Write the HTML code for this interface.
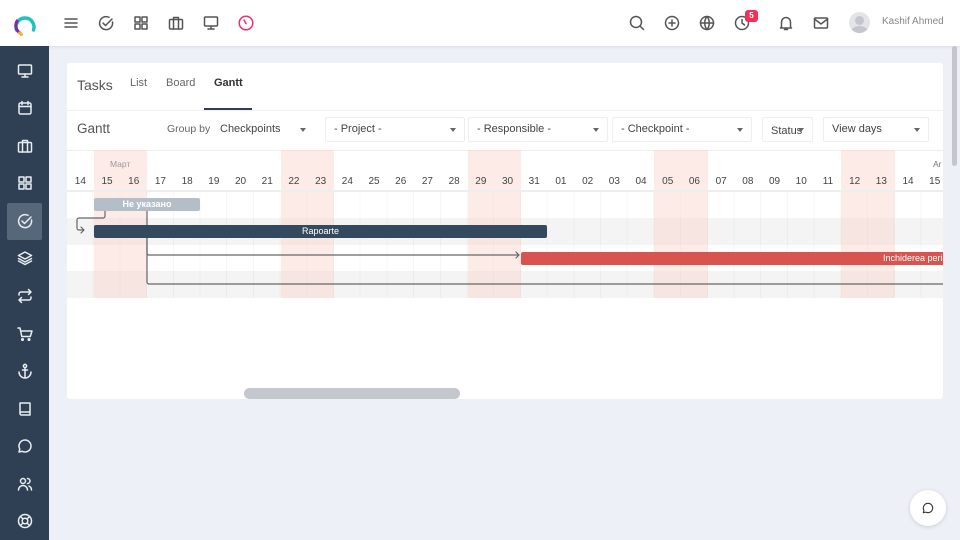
<!DOCTYPE html>
<html><head><meta charset="utf-8"><style>
*{box-sizing:border-box;margin:0;padding:0}
body{width:960px;height:540px;overflow:hidden;background:#eef0f8;font-family:"Liberation Sans","Noto Sans CJK JP",sans-serif;position:relative;color:#555}
.abs{position:absolute}
#top{left:0;top:0;width:960px;height:46px;background:#fff;box-shadow:0 1px 3px rgba(0,0,0,.08)}
#side{left:0;top:46px;width:49px;height:494px;background:#2f4054}
svg{fill:none;stroke-linecap:round;stroke-linejoin:round}
.ti{position:absolute;top:14px;width:18px;height:18px;stroke:#555;stroke-width:1.5}
.si{position:absolute;left:16px;width:18px;height:18px;stroke:#e8edf2;stroke-width:1.5}
#card{left:67px;top:63px;width:876px;height:336px;background:#fff;border-radius:3px}
.sel{position:absolute;top:117px;height:25px;border:1px solid #eee;border-radius:2px;font-size:11px;color:#444;padding:5px 8px;background:#fff}
.sel:after{content:"";position:absolute;right:8px;top:10px;border:3px solid transparent;border-top:4px solid #666}
.day{position:absolute;top:176px;width:26.7px;text-align:center;font-size:10px;color:#444}
.pink{position:absolute;top:150px;height:148px;width:53.4px;background:rgba(250,210,205,.45)}
.bar{position:absolute;height:13px;border-radius:2px;font-size:9px;color:#fff;text-align:center;line-height:13px}
</style></head><body>
<div id="top" class="abs"></div>
<svg class="abs" style="left:13px;top:13px" width="24" height="24" viewBox="0 0 24 24"><path d="M3.5 17 A9 9 0 1 1 20.5 17" stroke="#1ec2c0" stroke-width="3.5"/><path d="M4 8 A9 9 0 0 0 7 20" stroke="#7b2aa8" stroke-width="3"/><path d="M6.5 20 l2 1.5" stroke="#f5b52a" stroke-width="3"/></svg>
<svg class="ti" style="left:62px" viewBox="0 0 18 18"><path d="M3 5h12M3 9h12M3 13h12"/></svg>
<svg class="ti" style="left:97px" viewBox="0 0 18 18"><path d="M15.5 8A6.5 6.5 0 1 1 12 3.3"/><path d="M6 9l2.5 2.5L15 5"/></svg>
<svg class="ti" style="left:132px" viewBox="0 0 18 18"><rect x="3" y="3" width="5" height="5"/><rect x="10" y="3" width="5" height="5"/><rect x="3" y="10" width="5" height="5"/><rect x="10" y="10" width="5" height="5"/></svg>
<svg class="ti" style="left:167px" viewBox="0 0 18 18"><rect x="2.5" y="5.5" width="13" height="9.5" rx="1"/><path d="M6.5 5.5V3.5h5v2M6.5 5.5v9.5M11.5 5.5v9.5"/></svg>
<svg class="ti" style="left:202px" viewBox="0 0 18 18"><rect x="2.5" y="3" width="13" height="9" rx="1"/><path d="M9 12v3M6 15h6"/></svg>
<svg class="ti" style="left:237px;stroke:#f0306a" viewBox="0 0 18 18"><circle cx="9" cy="9" r="6.8"/><path d="M7 6l2 3.5"/></svg>
<svg class="ti" style="left:628px" viewBox="0 0 18 18"><circle cx="8" cy="8" r="5.5"/><path d="M12 12l3.5 3.5"/></svg>
<svg class="ti" style="left:663px" viewBox="0 0 18 18"><circle cx="9" cy="9" r="6.5"/><path d="M9 6v6M6 9h6"/></svg>
<svg class="ti" style="left:698px" viewBox="0 0 18 18"><circle cx="9" cy="9" r="6.5"/><path d="M2.5 9h13M9 2.5c-3 3.5-3 9.5 0 13M9 2.5c3 3.5 3 9.5 0 13"/></svg>
<svg class="ti" style="left:733px" viewBox="0 0 18 18"><circle cx="9" cy="9" r="6.5"/><path d="M9 5.5V9l2.5 2"/></svg>
<div class="abs" style="left:745px;top:10px;width:13px;height:12px;background:#f0305a;border-radius:3px;color:#fff;font-size:8px;text-align:center;line-height:12px;font-weight:bold">5</div>
<svg class="ti" style="left:777px" viewBox="0 0 18 18"><path d="M4.5 13V8a4.5 4.5 0 0 1 9 0v5l1 1h-11zM7.5 15.5h3"/></svg>
<svg class="ti" style="left:812px" viewBox="0 0 18 18"><rect x="2.5" y="4" width="13" height="10" rx="1"/><path d="M2.5 5l6.5 5 6.5-5"/></svg>
<div class="abs" style="left:849px;top:12px;width:21px;height:21px;border-radius:50%;background:#e2e4e8;overflow:hidden"><div class="abs" style="left:6px;top:4px;width:9px;height:9px;border-radius:50%;background:#c3c6cc"></div><div class="abs" style="left:2px;top:14px;width:17px;height:12px;border-radius:50%;background:#c3c6cc"></div></div>
<div class="abs" style="left:882px;top:16px;font-size:10px;color:#888">Kashif Ahmed</div>

<div id="side" class="abs"></div>
<div class="abs" style="left:7px;top:203px;width:35px;height:37px;background:#56677a;border-radius:2px"></div>
<svg class="si" style="top:62px" viewBox="0 0 18 18"><rect x="2.5" y="3" width="13" height="9" rx="1"/><path d="M9 12v3M6 15h6"/></svg>
<svg class="si" style="top:99px" viewBox="0 0 18 18"><rect x="3" y="4" width="12" height="11" rx="1.5"/><path d="M3 7.5h12M6 2.5v3M12 2.5v3"/></svg>
<svg class="si" style="top:137px" viewBox="0 0 18 18"><rect x="2.5" y="5.5" width="13" height="9.5" rx="1"/><path d="M6.5 5.5V3.5h5v2M6.5 5.5v9.5M11.5 5.5v9.5"/></svg>
<svg class="si" style="top:174px" viewBox="0 0 18 18"><rect x="3" y="3" width="5" height="5"/><rect x="10" y="3" width="5" height="5"/><rect x="3" y="10" width="5" height="5"/><rect x="10" y="10" width="5" height="5"/></svg>
<svg class="si" style="top:212px" viewBox="0 0 18 18"><path d="M15.5 8A6.5 6.5 0 1 1 12 3.3"/><path d="M6 9l2.5 2.5L15 5"/></svg>
<svg class="si" style="top:249px" viewBox="0 0 18 18"><path d="M9 3l6.5 3.5L9 10 2.5 6.5z"/><path d="M2.5 9.5L9 13l6.5-3.5M2.5 12L9 15.5l6.5-3.5"/></svg>
<svg class="si" style="top:287px" viewBox="0 0 18 18"><path d="M3 8V7a2 2 0 0 1 2-2h10M12.5 2.5L15 5l-2.5 2.5M15 10v1a2 2 0 0 1-2 2H3M5.5 15.5L3 13l2.5-2.5"/></svg>
<svg class="si" style="top:325px" viewBox="0 0 18 18"><path d="M2 3h2l1.8 8.5h8.5L16 6H5"/><circle cx="6.5" cy="14.5" r=".8"/><circle cx="13" cy="14.5" r=".8"/></svg>
<svg class="si" style="top:362px" viewBox="0 0 18 18"><circle cx="9" cy="4" r="1.6"/><path d="M9 5.6V16M3 10a6 6 0 0 0 12 0M6.5 8h5"/></svg>
<svg class="si" style="top:400px" viewBox="0 0 18 18"><path d="M4 3h10v12H5.5A1.5 1.5 0 0 1 4 13.5zM4 13.5A1.5 1.5 0 0 1 5.5 12H14"/></svg>
<svg class="si" style="top:437px" viewBox="0 0 18 18"><path d="M9 3a6 6 0 1 1-2.8 11.3L3 15l.8-3A6 6 0 0 1 9 3z"/></svg>
<svg class="si" style="top:475px" viewBox="0 0 18 18"><circle cx="7" cy="6" r="2.5"/><path d="M2.5 15a4.5 4.5 0 0 1 9 0M11.5 3.5a2.5 2.5 0 0 1 0 5M13 11a4.5 4.5 0 0 1 2.5 4"/></svg>
<svg class="si" style="top:512px" viewBox="0 0 18 18"><circle cx="9" cy="9" r="6.5"/><circle cx="9" cy="9" r="2.8"/><path d="M4.5 4.5l2.5 2.5M13.5 4.5L11 7M4.5 13.5L7 11M13.5 13.5L11 11"/></svg>

<div id="card" class="abs"></div>
<div class="abs" style="left:77px;top:77px;font-size:14px;color:#555">Tasks</div>
<div class="abs" style="left:130px;top:77px;font-size:11px;color:#666">List</div>
<div class="abs" style="left:166px;top:77px;font-size:11px;color:#666">Board</div>
<div class="abs" style="left:214px;top:77px;font-size:11px;color:#333;font-weight:bold">Gantt</div>
<div class="abs" style="left:204px;top:108px;width:48px;height:2px;background:#2f4054"></div>
<div class="abs" style="left:67px;top:110px;width:876px;height:1px;background:#f0f0f2"></div>
<div class="abs" style="left:77px;top:121px;font-size:13.5px;color:#555">Gantt</div>
<div class="abs" style="left:167px;top:123px;font-size:10.5px;color:#666">Group by:</div>
<div class="sel" style="left:211px;width:104px;border-color:#fff">Checkpoints</div>
<div class="sel" style="left:325px;width:140px">- Project -</div>
<div class="sel" style="left:468px;width:140px">- Responsible -</div>
<div class="sel" style="left:612px;width:140px">- Checkpoint -</div>
<div class="sel" style="left:762px;width:51px;padding-top:7px">Status</div>
<div class="sel" style="left:823px;width:106px">View days</div>

<div class="abs" style="left:67px;top:150px;width:876px;height:1px;background:#eee"></div>
<div class="abs" style="left:67px;top:218px;width:876px;height:27px;background:#f4f4f4"></div>
<div class="abs" style="left:67px;top:271px;width:876px;height:27px;background:#f4f4f4"></div>
<div class="abs" style="left:67px;top:192px;width:876px;height:106px;background:repeating-linear-gradient(90deg,transparent 0,transparent 25.7px,rgba(0,0,0,.03) 25.7px,rgba(0,0,0,.03) 26.7px)"></div>
<div class="pink" style="left:93.7px"></div>
<div class="pink" style="left:280.6px"></div>
<div class="pink" style="left:467.5px"></div>
<div class="pink" style="left:654.4px"></div>
<div class="pink" style="left:841.3px"></div>
<div class="abs" style="left:67px;top:190px;width:876px;height:2px;background:#eee"></div>
<div class="abs" style="left:110px;top:159px;font-size:8.5px;color:#999">Март</div>
<div class="abs" style="left:933px;top:159px;font-size:8.5px;color:#777">Ar</div>
<div class="day" style="left:67px">14</div><div class="day" style="left:93.7px">15</div><div class="day" style="left:120.4px">16</div><div class="day" style="left:147.1px">17</div><div class="day" style="left:173.8px">18</div><div class="day" style="left:200.5px">19</div><div class="day" style="left:227.2px">20</div><div class="day" style="left:253.9px">21</div><div class="day" style="left:280.6px">22</div><div class="day" style="left:307.3px">23</div><div class="day" style="left:334px">24</div><div class="day" style="left:360.7px">25</div><div class="day" style="left:387.4px">26</div><div class="day" style="left:414.1px">27</div><div class="day" style="left:440.8px">28</div><div class="day" style="left:467.5px">29</div><div class="day" style="left:494.2px">30</div><div class="day" style="left:520.9px">31</div><div class="day" style="left:547.6px">01</div><div class="day" style="left:574.3px">02</div><div class="day" style="left:601px">03</div><div class="day" style="left:627.7px">04</div><div class="day" style="left:654.4px">05</div><div class="day" style="left:681.1px">06</div><div class="day" style="left:707.8px">07</div><div class="day" style="left:734.5px">08</div><div class="day" style="left:761.2px">09</div><div class="day" style="left:787.9px">10</div><div class="day" style="left:814.6px">11</div><div class="day" style="left:841.3px">12</div><div class="day" style="left:868px">13</div><div class="day" style="left:894.7px">14</div><div class="day" style="left:921.4px">15</div>

<svg class="abs" style="left:67px;top:192px" width="876" height="106" viewBox="0 0 876 106"><g stroke="#666" stroke-width="1.2" fill="none"><path d="M38 19v5a2 2 0 0 1-2 2H12a2 2 0 0 0-2 2v8a2 2 0 0 0 2 2h5M14 35l3 3-3 3"/><path d="M80 19v42a2 2 0 0 0 2 2h370M449 60l3 3-3 3"/><path d="M80 46v44a2 2 0 0 0 2 2h794"/></g></svg>
<div class="bar" style="left:94px;top:198px;width:106px;background:#b4bec8;font-weight:bold">Не указано</div>
<div class="bar" style="left:94px;top:225px;width:453px;background:#34495e">Rapoarte</div>
<div class="bar" style="left:521px;top:252px;width:422px;background:#d9534f;overflow:hidden;white-space:nowrap;border-radius:2px 0 0 2px"><span style="position:absolute;left:362px">Inchiderea perioadei</span></div>

<div class="abs" style="left:244px;top:388px;width:216px;height:11px;background:#c4c8ce;border-radius:6px"></div>
<div class="abs" style="left:952px;top:46px;width:5px;height:120px;background:#c4c6ca;border-radius:3px"></div>
<div class="abs" style="left:910px;top:490px;width:36px;height:36px;background:#fff;border-radius:50%;box-shadow:0 1px 4px rgba(0,0,0,.15)"></div>
<svg class="abs" style="left:921px;top:501px;stroke:#333;stroke-width:1.4" width="14" height="14" viewBox="0 0 18 18"><path d="M9 3a6 6 0 1 1-2.8 11.3L3 15l.8-3A6 6 0 0 1 9 3z"/></svg>
</body></html>
